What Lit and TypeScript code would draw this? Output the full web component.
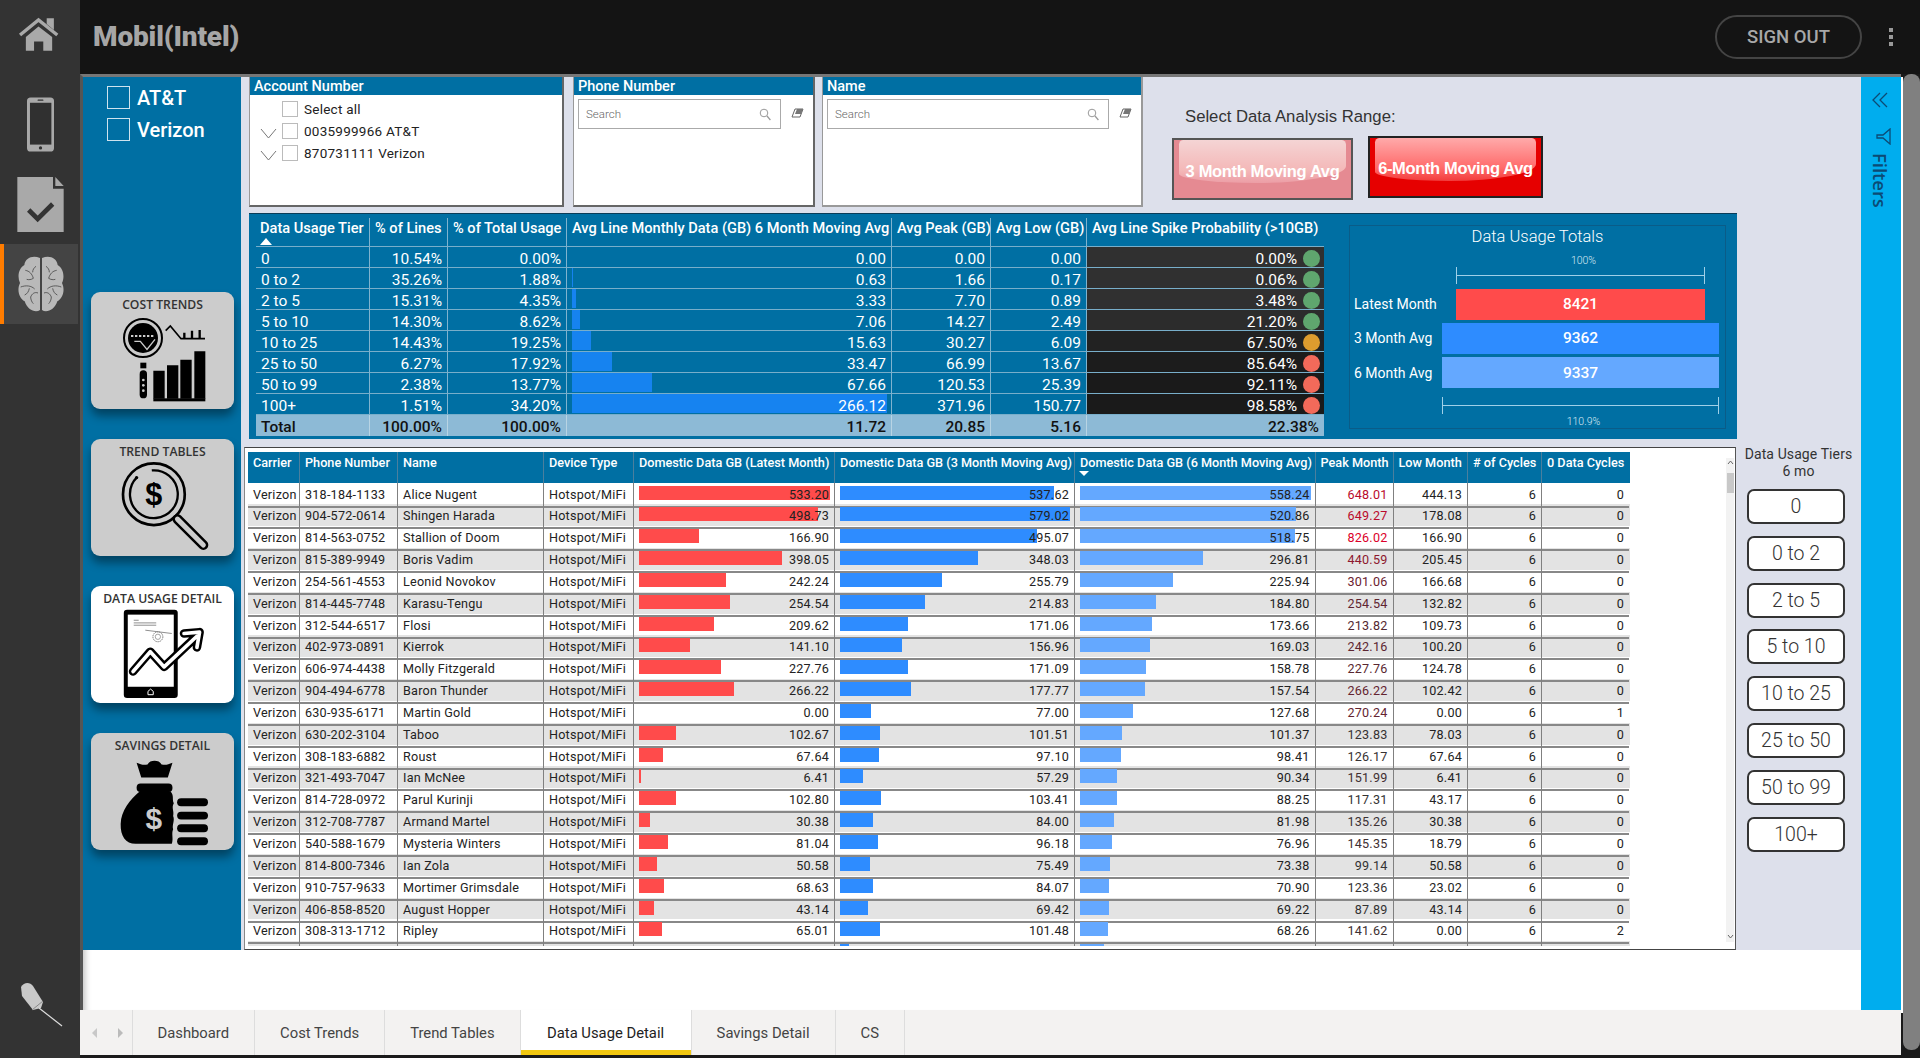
import { LitElement, html, css, svg } from 'lit';
import { customElement } from 'lit/decorators.js';

type Row = [string, string, number, number, number, number, number, number];

const ROWS: Row[] = [
  ['318-184-1133', 'Alice Nugent', 533.2, 537.62, 558.24, 648.01, 444.13, 0],
  ['904-572-0614', 'Shingen Harada', 498.73, 579.02, 520.86, 649.27, 178.08, 0],
  ['814-563-0752', 'Stallion of Doom', 166.9, 495.07, 518.75, 826.02, 166.9, 0],
  ['815-389-9949', 'Boris Vadim', 398.05, 348.03, 296.81, 440.59, 205.45, 0],
  ['254-561-4553', 'Leonid Novokov', 242.24, 255.79, 225.94, 301.06, 166.68, 0],
  ['814-445-7748', 'Karasu-Tengu', 254.54, 214.83, 184.8, 254.54, 132.82, 0],
  ['312-544-6517', 'Flosi', 209.62, 171.06, 173.66, 213.82, 109.73, 0],
  ['402-973-0891', 'Kierrok', 141.1, 156.96, 169.03, 242.16, 100.2, 0],
  ['606-974-4438', 'Molly Fitzgerald', 227.76, 171.09, 158.78, 227.76, 124.78, 0],
  ['904-494-6778', 'Baron Thunder', 266.22, 177.77, 157.54, 266.22, 102.42, 0],
  ['630-935-6171', 'Martin Gold', 0, 77, 127.68, 270.24, 0, 1],
  ['630-202-3104', 'Taboo', 102.67, 101.51, 101.37, 123.83, 78.03, 0],
  ['308-183-6882', 'Roust', 67.64, 97.1, 98.41, 126.17, 67.64, 0],
  ['321-493-7047', 'Ian McNee', 6.41, 57.29, 90.34, 151.99, 6.41, 0],
  ['814-728-0972', 'Parul Kurinji', 102.8, 103.41, 88.25, 117.31, 43.17, 0],
  ['312-708-7787', 'Armand Martel', 30.38, 84, 81.98, 135.26, 30.38, 0],
  ['540-588-1679', 'Mysteria Winters', 81.04, 96.18, 76.96, 145.35, 18.79, 0],
  ['814-800-7346', 'Ian Zola', 50.58, 75.49, 73.38, 99.14, 50.58, 0],
  ['910-757-9633', 'Mortimer Grimsdale', 68.63, 84.07, 70.9, 123.36, 23.02, 0],
  ['406-858-8520', 'August Hopper', 43.14, 69.42, 69.22, 87.89, 43.14, 0],
  ['308-313-1712', 'Ripley', 65.01, 101.48, 68.26, 141.62, 0, 2],
];

const TIERS = [
  { tier: '0', lines: '10.54%', usage: '0.00%', avg: '0.00', bar: 0, peak: '0.00', low: '0.00', spike: '0.00%', bg: '#303030', dot: '#5fa66e' },
  { tier: '0 to 2', lines: '35.26%', usage: '1.88%', avg: '0.63', bar: 1, peak: '1.66', low: '0.17', spike: '0.06%', bg: '#303030', dot: '#5fa66e' },
  { tier: '2 to 5', lines: '15.31%', usage: '4.35%', avg: '3.33', bar: 3.5, peak: '7.70', low: '0.89', spike: '3.48%', bg: '#303030', dot: '#5fa66e' },
  { tier: '5 to 10', lines: '14.30%', usage: '8.62%', avg: '7.06', bar: 8, peak: '14.27', low: '2.49', spike: '21.20%', bg: '#2c2c2c', dot: '#5fa66e' },
  { tier: '10 to 25', lines: '14.43%', usage: '19.25%', avg: '15.63', bar: 18.5, peak: '30.27', low: '6.09', spike: '67.50%', bg: '#222', dot: '#dd9c2e' },
  { tier: '25 to 50', lines: '6.27%', usage: '17.92%', avg: '33.47', bar: 39.5, peak: '66.99', low: '13.67', spike: '85.64%', bg: '#1c1c1c', dot: '#f26a5a' },
  { tier: '50 to 99', lines: '2.38%', usage: '13.77%', avg: '67.66', bar: 80, peak: '120.53', low: '25.39', spike: '92.11%', bg: '#1a1a1a', dot: '#f26a5a' },
  { tier: '100+', lines: '1.51%', usage: '34.20%', avg: '266.12', bar: 315, peak: '371.96', low: '150.77', spike: '98.58%', bg: '#1a1a1a', dot: '#f26a5a' },
];

const TIER_BUTTONS = ['0', '0 to 2', '2 to 5', '5 to 10', '10 to 25', '25 to 50', '50 to 99', '100+'];
const TABS = ['Dashboard', 'Cost Trends', 'Trend Tables', 'Data Usage Detail', 'Savings Detail', 'CS'];
const ACTIVE_TAB = 'Data Usage Detail';

// red shade of the Peak Month column, grows with the value
function peakColor(v: number) {
  const t = Math.min(1, Math.max(0, (v - 120) / 700)) ** 0.8;
  const r = Math.round(0x33 + (0xdc - 0x33) * t);
  const g = Math.round(0x33 - 0x33 * t);
  const b = Math.round(0x33 + (0x2a - 0x33) * t);
  return `rgb(${r},${g},${b})`;
}

const homeIcon = svg`<svg class="rail-icon" width="41" height="34" viewBox="55 55 120 98">
  <path d="M78 113 115 82l40 31v40h-26v-27h-27v27H78z" fill="#a9a9a9"/>
  <path d="M61 107 115 63l55 44" fill="none" stroke="#a9a9a9" stroke-width="10"/>
  <path d="M139 58h21v34l-21-17z" fill="#a9a9a9"/></svg>`;

const phoneIcon = svg`<svg class="rail-icon" width="27" height="55" viewBox="80 292 82 164">
  <rect x="80" y="292" width="82" height="164" rx="11" fill="#a9a9a9"/>
  <rect x="89" y="308" width="65" height="127" fill="#303030"/>
  <rect x="112" y="298" width="18" height="4" rx="2" fill="#303030"/>
  <circle cx="121" cy="445" r="5" fill="#303030"/></svg>`;

const docIcon = svg`<svg class="rail-icon" width="47" height="55" viewBox="52 531 139 165">
  <path d="M52 531h107v35h32v130H52z" fill="#a9a9a9"/>
  <path d="M166 531l25 27h-25z" fill="#a9a9a9"/>
  <path d="M86 630l27 27 45-45" fill="none" stroke="#333" stroke-width="14"/></svg>`;

const brainIcon = svg`<svg width="46" height="56" viewBox="52 770 138 166">
  <path d="M118 775c-23-9-44 0-47 21-17 10-22 34-13 54-10 21-3 45 14 55 8 26 33 36 46 26z" fill="#b9b9b9"/>
  <path d="M124 775c23-9 44 0 47 21 17 10 22 34 13 54 10 21 3 45-14 55-8 26-33 36-46 26z" fill="#b9b9b9"/>
  <g fill="none" stroke="#444" stroke-width="2.4">
    <path d="M74 812c12 2 20 10 24 24M98 836c-6 4-14 5-20 3M60 862c16-6 32-4 42 6M86 866c-2 10-6 16-14 20M112 880c-10-4-18 2-22 12 0 8 4 16 8 20M106 800c-6 4-10 10-10 18"/>
    <path d="M168 812c-12 2-20 10-24 24M144 836c6 4 14 5 20 3M182 862c-16-6-32-4-42 6M156 866c2 10 6 16 14 20M130 880c10-4 18 2 22 12 0 8-4 16-8 20M136 800c6 4 10 10 10 18"/>
  </g></svg>`;

const pinIcon = svg`<svg width="45" height="46" viewBox="0 0 45 46">
  <path d="M3 6c3-5 9-5 12-1l10 16-2 6-8 2-11-14z" fill="#c9c9c9"/>
  <path d="M21 27 44 45" stroke="#ddd" stroke-width="1.2"/>
  <path d="M14 29 25 20" stroke="#888" stroke-width="1"/></svg>`;

const costIcon = svg`<svg class="cost" width="85" height="84" viewBox="125 118 255 252">
  <circle cx="188" cy="178" r="57" fill="none" stroke="#000" stroke-width="6"/>
  <circle cx="188" cy="178" r="45" fill="#000"/>
  <path d="M152 172h72" stroke="#ccc" stroke-width="6" stroke-dasharray="7 5"/>
  <path d="M162 188h18l20 24 24-30" fill="none" stroke="#ccc" stroke-width="4"/>
  <path d="M256 156l14-14 32 38h72" fill="none" stroke="#000" stroke-width="5"/>
  <path d="M312 180v-18M335 180v-24M358 180v-26" stroke="#000" stroke-width="7"/>
  <rect x="180" y="252" width="18" height="17" fill="#000"/>
  <rect x="178" y="275" width="22" height="84" rx="11" fill="#000"/>
  <circle cx="189" cy="304" r="4" fill="#ccc"/><circle cx="189" cy="320" r="4" fill="#ccc"/><circle cx="189" cy="336" r="4" fill="#ccc"/>
  <path d="M219 276h34v84h-34zM260 260h34v100h-34zM300 243h34v117h-34zM342 218h33v142h-33z" fill="#000"/>
  <rect x="219" y="359" width="156" height="9" fill="#000"/></svg>`;

const trendIcon = svg`<svg width="88" height="88" viewBox="118 548 265 265">
  <circle cx="217" cy="645" r="93" fill="none" stroke="#000" stroke-width="8"/>
  <circle cx="217" cy="645" r="72" fill="none" stroke="#000" stroke-width="7" stroke-dasharray="400 52" transform="rotate(-95 217 645)"/>
  <circle cx="165" cy="595" r="5" fill="#000"/>
  <text x="217" y="678" text-anchor="middle" font-family="Liberation Sans, sans-serif" font-size="92" font-weight="700" fill="#000">$</text>
  <path d="M288 720l78 78" stroke="#000" stroke-width="30" stroke-linecap="round"/>
  <path d="M288 720l78 78" stroke="#ccc" stroke-width="15" stroke-linecap="round"/></svg>`;

const usageIcon = svg`<svg width="83" height="90" viewBox="128 113 250 272">
  <rect x="130" y="115" width="163" height="267" rx="10" fill="#000"/>
  <rect x="142" y="130" width="139" height="218" fill="#fff"/>
  <path d="M203 372v-10l8-7 8 7v10z" fill="none" stroke="#fff" stroke-width="3"/>
  <path d="M160 147h15M160 155h68M160 162h68M195 177l80 10" stroke="#555" stroke-width="2"/>
  <circle cx="233" cy="197" r="15" fill="none" stroke="#777" stroke-width="3" stroke-dasharray="4 2"/>
  <circle cx="233" cy="197" r="8" fill="none" stroke="#777" stroke-width="2"/>
  <path d="M158 302l52-60 42 46 98-92M312 187l47-4-8 46" fill="none" stroke="#000" stroke-width="26" stroke-linejoin="round" stroke-linecap="round"/>
  <path d="M158 302l52-60 42 46 98-92M312 187l47-4-8 46" fill="none" stroke="#fff" stroke-width="11" stroke-linejoin="round" stroke-linecap="round"/></svg>`;

const savingsIcon = svg`<svg width="89" height="90" viewBox="118 558 268 270">
  <path d="M168 578c14 6 24 8 34 4 4-14 36-14 40 0 10 4 20 2 34-4l-14 44h-80z" fill="#000"/>
  <rect x="168" y="640" width="108" height="26" rx="12" fill="#000"/>
  <path d="M178 664h92c12 14 4 24 10 36-8 14 2 24-2 38 6 14-4 26 0 40-6 14 2 28-4 44H165c-30 0-46-24-45-60 1-38 28-74 58-98z" fill="#000"/>
  <text x="220" y="776" text-anchor="middle" font-family="Liberation Sans, sans-serif" font-size="90" font-weight="700" fill="#ccc">$</text>
  <rect x="290" y="685" width="93" height="24" rx="12" fill="#000"/>
  <rect x="290" y="725" width="93" height="24" rx="12" fill="#000"/>
  <rect x="290" y="763" width="93" height="24" rx="12" fill="#000"/>
  <rect x="290" y="802" width="93" height="24" rx="12" fill="#000"/></svg>`;

const searchIcon = svg`<svg width="12" height="13" viewBox="0 0 12 13"><circle cx="5" cy="5" r="3.8" fill="none" stroke="#999" stroke-width="1"/><path d="M8 8l3.4 4" stroke="#999" stroke-width="1.2"/></svg>`;
const eraserIcon = svg`<svg width="13" height="10" viewBox="0 0 13 10"><path d="M4 1h8L9 9H1z" fill="none" stroke="#666" stroke-width="1"/><path d="M6 1h6l-2 5H4z" fill="#777"/></svg>`;
const chevronIcon = svg`<svg width="17" height="11" viewBox="0 0 17 11"><path d="M1 1l7.5 9L16 1" fill="none" stroke="#777" stroke-width="1"/></svg>`;

@customElement('app-root')
export class AppRoot extends LitElement {
  static styles = css`
    :host {
      display: flex;
      width: 1920px;
      height: 1058px;
      overflow: hidden;
      background: #1a1a1a;
      font-family: Roboto, 'Liberation Sans', sans-serif;
    }
    .rail {
      width: 80px;
      height: 1058px;
      flex: none;
      background: #333;
      display: flex;
      flex-direction: column;
    }
    .rail-icon {
      display: block;
    }
    .rail .home { margin: 17px 0 0 18px; }
    .rail .phone { margin: 46px 0 0 27px; }
    .rail .doc { margin: 25px 0 0 17px; }
    .rail-active {
      margin-top: 12px;
      width: 78px;
      height: 80px;
      flex: none;
      background: #444;
      border-left: 4px solid #ff7c00;
      box-sizing: border-box;
      padding: 12px 0 0 14px;
    }
    .rail .pin { margin: auto 0 27px 18px; }
    .main {
      flex: 1;
      display: flex;
      flex-direction: column;
      min-width: 0;
    }
    .topbar {
      height: 74px;
      flex: none;
      background: #141414;
      display: flex;
      align-items: center;
      padding-left: 13px;
    }
    .logo {
      font-size: 28px;
      font-weight: 900;
      letter-spacing: -0.15px;
      color: #a6a6a6;
      margin-top: -2px;
    }
    .signout {
      margin-left: auto;
      width: 147px;
      height: 44px;
      box-sizing: border-box;
      border: 2px solid #444;
      border-radius: 22px;
      color: #a8a8a8;
      font-size: 18.5px;
      font-weight: 500;
      display: flex;
      align-items: center;
      justify-content: center;
    }
    .kebab {
      width: 4px;
      margin: 0 27px 0 27px;
      display: flex;
      flex-direction: column;
      gap: 3px;
    }
    .kebab i {
      display: block;
      width: 4px;
      height: 4px;
      background: #999;
    }
    .workspace {
      flex: 1;
      display: flex;
      min-height: 0;
    }
    .page-col {
      flex: 1;
      display: flex;
      flex-direction: column;
      min-width: 0;
      height: 981px;
    }
    .page {
      height: 936px;
      flex: none;
      display: flex;
      background: #fff;
      border-top: 3px solid #777;
      border-left: 3px solid #555;
      box-sizing: border-box;
    }
    .canvas-col {
      width: 1778px;
      flex: none;
      box-shadow: inset 8px 0 6px -6px rgba(0, 0, 0, 0.25);
    }
    .report {
      height: 873px;
      display: flex;
      background: #dde0eb;
    }
    .left-panel {
      width: 158px;
      flex: none;
      background: #006fa3;
      box-sizing: border-box;
      padding-top: 9px;
    }
    .check {
      display: flex;
      align-items: center;
      height: 23px;
      margin: 0 0 9px 24px;
      color: #fff;
      font-size: 20px;
      font-weight: 500;
      gap: 7px;
    }
    .check i {
      display: block;
      width: 23px;
      height: 23px;
      box-sizing: border-box;
      border: 1px solid #cfe3ee;
    }
    .navs {
      margin: 151px 0 0 8px;
      display: flex;
      flex-direction: column;
      gap: 30.5px;
    }
    .nav {
      width: 143px;
      height: 116.5px;
      box-sizing: border-box;
      background: #ccc;
      border-radius: 9px;
      box-shadow: 0 7px 10px rgba(0, 0, 0, 0.4);
      display: flex;
      flex-direction: column;
      align-items: center;
      font-family: 'Open Sans', sans-serif;
      font-weight: 600;
      font-size: 12.2px;
      color: #333;
      padding-top: 4px;
      line-height: 17px;
    }
    .nav.on {
      background: #fff;
    }
    .nav svg {
      display: block;
      margin-top: 2px;
      margin-left: 4px;
    }
    .nav svg.cost {
      margin-top: 5px;
    }
    .center {
      flex: 1;
      min-width: 0;
      padding-left: 3px;
    }
    .slicers {
      height: 130px;
      margin-left: 5px;
      display: flex;
    }
    .slicer {
      box-sizing: border-box;
      background: #fff;
      border-right: 2px solid #666;
      border-bottom: 2px solid #666;
      border-left: 1px solid #999;
    }
    .slicer.account { width: 315px; }
    .slicer.phone { width: 242px; margin-left: 9px; }
    .slicer.name { width: 321px; margin-left: 7px; border-color: #999; }
    .slicer-head {
      height: 18px;
      line-height: 19px;
      background: #006fa3;
      color: #fff;
      font-size: 14.5px;
      font-weight: 500;
      padding-left: 4px;
    }
    .search-row {
      display: flex;
      align-items: center;
      padding: 4px 0 0 4px;
    }
    .search {
      box-sizing: border-box;
      height: 30px;
      flex: 1;
      border: 1px solid #aaa;
      display: flex;
      align-items: center;
      justify-content: space-between;
      padding: 0 9px 0 7px;
      font-size: 11.5px;
      font-weight: 300;
      color: #666;
    }
    .eraser {
      width: 32px;
      text-align: center;
      margin-top: -3px;
    }
    .options {
      padding-top: 3px;
    }
    .option {
      height: 22px;
      display: flex;
      align-items: center;
      font-size: 13.5px;
      letter-spacing: 0.25px;
      color: #222;
    }
    .option .chev {
      width: 17px;
      height: 11px;
      margin-left: 10px;
    }
    .option .box {
      width: 16px;
      height: 16px;
      box-sizing: border-box;
      border: 1px solid #bbb;
      margin: 0 6px 0 5px;
      flex: none;
    }
    .range {
      margin-left: 29px;
      color: #333;
      font-family: 'Liberation Sans', sans-serif;
    }
    .range-title {
      margin: 30px 0 0 13px;
      font-size: 16.7px;
      line-height: 20px;
    }
    .range-btns {
      display: flex;
      gap: 15px;
      margin-top: 9px;
    }
    .gloss {
      position: relative;
      overflow: hidden;
      box-sizing: border-box;
      width: 175px;
      height: 62px;
      border: 2.5px solid #222;
      background: #e60000;
      color: #fff;
      font-weight: 700;
      font-size: 16.5px;
      letter-spacing: -0.35px;
      display: flex;
      align-items: center;
      justify-content: center;
      padding-top: 2px;
    }
    .gloss::before {
      content: '';
      position: absolute;
      left: 5px;
      right: 5px;
      top: 0;
      height: 43px;
      border-radius: 6px 6px 70% 60% / 6px 6px 22px 12px;
      background: linear-gradient(#ffaaaa, #ff6a6a 70%, #f23c3c);
    }
    .gloss span {
      position: relative;
    }
    .gloss.faded {
      width: 181px;
      margin-top: 2px;
      border-color: #555;
      background: #e58a92;
      padding-top: 4px;
    }
    .gloss.faded::before {
      background: linear-gradient(#f4d4d4, #f4b8b8 70%, #ec9ea6);
    }
    .summary {
      width: 1488px;
      height: 226px;
      margin: 6px 0 0 5px;
      box-sizing: border-box;
      background: #006fa3;
      border-top: 1px solid #0a3c58;
      display: flex;
      padding: 4px 0 0 7px;
    }
    .tier-table {
      width: 1068px;
      flex: none;
      display: grid;
      grid-template-columns: 114px 78px 119px 325px 99px 96px 237px;
      grid-template-rows: 29px repeat(9, 21px);
      color: #fff;
      font-size: 15.5px;
    }
    .tier-table > div {
      box-sizing: border-box;
      border-right: 1px solid #7fb3cf;
      border-bottom: 1.5px solid #78aeca;
      padding-right: 5px;
      text-align: right;
      line-height: 25px;
      position: relative;
      white-space: nowrap;
    }
    .tier-table > div.last {
      border-right: 0;
    }
    .tier-table > div.th {
      font-weight: 500;
      font-size: 14.6px;
      line-height: 20px;
      text-align: left;
      padding-left: 5px;
    }
    .tier-table > div.th.left {
      padding-left: 4px;
    }
    .tier-table > div.first {
      text-align: left;
      padding-left: 5px;
    }
    .sort-up {
      position: absolute;
      left: 4px;
      top: 20px;
      width: 0;
      height: 0;
      border: 6px solid transparent;
      border-top: 0;
      border-bottom: 7px solid #fff;
    }
    .tier-bar {
      position: absolute;
      left: 5px;
      top: 0;
      bottom: 1px;
      background: #1683f0;
    }
    .tier-table .cell-text {
      position: relative;
    }
    .tier-table > div.spike {
      padding-right: 27px;
    }
    .dot {
      position: absolute;
      right: 4px;
      top: 2.5px;
      width: 17px;
      height: 17px;
      border-radius: 50%;
    }
    .tier-table > div.total {
      background: #8dbad6;
      color: #111;
      font-weight: 500;
      border-bottom: 0;
      border-right-color: #b8d4e4;
      line-height: 24px;
    }
    .totals {
      width: 377px;
      height: 204px;
      flex: none;
      margin: 7px 0 0 25px;
      box-sizing: border-box;
      border: 1px solid #0a5c88;
      color: #fff;
      display: flex;
      flex-direction: column;
    }
    .totals-title {
      font-size: 16.5px;
      font-weight: 300;
      text-align: center;
      line-height: 22px;
      margin-top: 0;
      height: 25px;
    }
    .totals-pct {
      margin-left: 92px;
      text-align: center;
      font-size: 10.5px;
      font-weight: 300;
      color: #d8e8f2;
      line-height: 13px;
      margin-top: 3px;
    }
    .totals-pct.end {
      margin-top: 1px;
    }
    .bracket {
      margin-left: 92px;
      width: 277px;
      height: 17px;
      box-sizing: border-box;
      border-left: 1px solid #9fd0e8;
      border-right: 1px solid #9fd0e8;
      background: linear-gradient(#9fd0e8, #9fd0e8) center / 100% 1px no-repeat;
      flex: none;
    }
    .bracket.inset {
      margin-left: 106px;
      width: 249px;
      margin-top: 0;
    }
    .bracket.low {
      margin-top: 9px;
    }
    .bullet {
      display: flex;
      align-items: center;
      height: 31px;
      font-size: 14px;
      font-weight: 400;
      margin-top: 3.5px;
    }
    .bullet.first {
      margin-top: 5px;
    }
    .bullet label {
      width: 92px;
      flex: none;
      padding-left: 4px;
      box-sizing: border-box;
    }
    .bullet b {
      height: 100%;
      width: 277px;
      display: flex;
      align-items: center;
      justify-content: center;
      font-size: 15.5px;
      font-weight: 500;
    }
    .bullet.first b {
      width: 249px;
      margin-left: 14px;
    }
    .detail-row {
      display: flex;
      margin-top: 8px;
      height: 503px;
    }
    .detail {
      width: 1492px;
      flex: none;
      box-sizing: border-box;
      background: #fff;
      border-top: 1px solid #444;
      border-right: 1.5px solid #555;
      border-bottom: 1.5px solid #444;
      border-left: 1px solid #888;
      padding: 4px 2px 0 3px;
      display: flex;
      overflow: hidden;
    }
    .grid-wrap {
      width: 1382px;
      flex: none;
      overflow: hidden;
      height: 494px;
    }
    .grid-row {
      display: grid;
      grid-template-columns: 52px 98px 146px 90px 201px 240px 240.5px 78px 74.5px 74px 87px;
      height: 21.85px;
      font-size: 12.6px;
      letter-spacing: 0.22px;
      color: #222;
    }
    .grid-row:nth-child(even) {
      background: #e3e3e3;
    }
    .grid-row > div {
      box-sizing: border-box;
      border-right: 1.5px solid #808080;
      border-bottom: 2px solid #888;
      padding: 0 5px;
      line-height: 23px;
      white-space: nowrap;
      position: relative;
    }
    .grid-row > div:last-child {
      border-right: 0;
    }
    .grid-row .num {
      text-align: right;
    }
    .grid-row .num span {
      position: relative;
    }
    .grid-bar {
      position: absolute;
      left: 5px;
      top: 3px;
      height: 14px;
    }
    .grid-bar.red { background: #ff4b4b; }
    .grid-bar.blue { background: #2e8cff; }
    .grid-bar.sky { background: #64a8ff; }
    .grid-head {
      display: grid;
      grid-template-columns: 52px 98px 146px 90px 201px 240px 240.5px 78px 74.5px 74px 87px;
      height: 30.5px;
      background: #006fa3;
      color: #fff;
      font-size: 12.7px;
      font-weight: 500;
      line-height: 14px;
    }
    .grid-head > div {
      box-sizing: border-box;
      border-right: 1.5px solid #4a7f9e;
      padding: 4px 0 0 5px;
      white-space: nowrap;
      position: relative;
      overflow: hidden;
    }
    .grid-head > div:last-child {
      border-right: 0;
    }
    .sort-down {
      position: absolute;
      left: 4px;
      top: 19px;
      width: 0;
      height: 0;
      border: 5px solid transparent;
      border-bottom: 0;
      border-top: 5px solid #fff;
    }
    .scroll {
      width: 8px;
      margin-left: 96px;
      margin-top: 6px;
      height: 484px;
      flex: none;
      background: #f2f2f2;
      display: flex;
      flex-direction: column;
      align-items: center;
    }
    .scroll .thumb {
      width: 7px;
      height: 20px;
      margin-top: 8px;
      background: #c8c8c8;
    }
    .scroll svg {
      display: block;
      flex: none;
    }
    .scroll svg.down {
      margin-top: auto;
      margin-bottom: 3px;
    }
    .tiers {
      width: 125px;
      flex: none;
      text-align: center;
    }
    .tiers-title {
      font-size: 14px;
      line-height: 17px;
      color: #333;
      letter-spacing: 0.1px;
      height: 43px;
      margin-top: -1px;
      box-sizing: border-box;
    }
    .tier-btn {
      width: 98px;
      height: 35px;
      box-sizing: border-box;
      margin: 0 0 11.8px 11px;
      background: #fff;
      border: 2px solid #333;
      border-radius: 7px;
      display: flex;
      align-items: center;
      justify-content: center;
      font-size: 19.5px;
      font-weight: 300;
      color: #333;
    }
    .filter-pane {
      width: 40px;
      height: 933px;
      flex: none;
      background: #00adee;
      display: flex;
      flex-direction: column;
      align-items: center;
      color: #0c4a74;
    }
    .filter-pane .back { display: block; margin: 15px 0 0 -3px; }
    .filter-pane .funnel { display: block; margin: 20px 0 0 5px; }
    .filter-label {
      writing-mode: vertical-rl;
      font-family: 'Open Sans', sans-serif;
      font-size: 18.4px;
      font-weight: 600;
      margin: 8px 0 0 -2px;
      line-height: 20px;
    }
    .tabs {
      height: 45px;
      flex: none;
      background: #f3f2f1;
      display: flex;
      padding-left: 3px;
      font-size: 14.8px;
      color: #444;
    }
    .tab-arrows {
      width: 49.5px;
      flex: none;
      display: flex;
      align-items: center;
      gap: 21px;
      padding-left: 9px;
      box-sizing: border-box;
      border-right: 1px solid #ddd;
    }
    .tab-arrows i {
      display: block;
      width: 0;
      height: 0;
      border: 5px solid transparent;
      border-left: 0;
      border-right: 5px solid #c8c8c8;
    }
    .tab-arrows i + i {
      border-right: 0;
      border-left: 5px solid #bbb;
    }
    .tab {
      padding: 0 25px;
      display: flex;
      align-items: center;
      border-right: 1px solid #ddd;
      box-sizing: border-box;
    }
    .tab.on {
      padding: 0 26.5px;
      background: #fff;
      color: #222;
      box-shadow: inset 0 -5px 0 #f2c811;
    }
    .page-scroll {
      width: 17px;
      flex: none;
      margin-left: 2px;
      height: 976px;
      background: #808080;
      border-radius: 8px;
    }
    .gutter {
      width: 2px;
      flex: none;
      background: #fff;
      height: 936px;
    }
  `;

  private renderBar(value: number, max: number, full: number, color: string) {
    return html`<div class="num">
      <i class="grid-bar ${color}" style="width:${(value / max) * full}px"></i>
      <span>${value.toFixed(2)}</span>
    </div>`;
  }

  private renderTierTable() {
    return html`<div class="tier-table">
      <div class="th left">Data Usage Tier<i class="sort-up"></i></div>
      <div class="th">% of Lines</div>
      <div class="th">% of Total Usage</div>
      <div class="th">Avg Line Monthly Data (GB) 6 Month Moving Avg</div>
      <div class="th">Avg Peak (GB)</div>
      <div class="th">Avg Low (GB)</div>
      <div class="th last">Avg Line Spike Probability (&gt;10GB)</div>
      ${TIERS.map(
        t => html`<div class="first">${t.tier}</div>
          <div>${t.lines}</div>
          <div>${t.usage}</div>
          <div>
            ${t.bar ? html`<i class="tier-bar" style="width:${t.bar}px"></i>` : ''}
            <span class="cell-text">${t.avg}</span>
          </div>
          <div>${t.peak}</div>
          <div>${t.low}</div>
          <div class="spike last" style="background:${t.bg}">
            ${t.spike}<i class="dot" style="background:${t.dot}"></i>
          </div>`,
      )}
      <div class="first total">Total</div>
      <div class="total">100.00%</div>
      <div class="total">100.00%</div>
      <div class="total">11.72</div>
      <div class="total">20.85</div>
      <div class="total">5.16</div>
      <div class="total last">22.38%</div>
    </div>`;
  }

  private renderTotals() {
    return html`<div class="totals">
      <div class="totals-title">Data Usage Totals</div>
      <div class="totals-pct">100%</div>
      <div class="bracket inset"></div>
      <div class="bullet first"><label>Latest Month</label><b style="background:#ff4b4b">8421</b></div>
      <div class="bullet"><label>3 Month Avg</label><b style="background:#2e8cff">9362</b></div>
      <div class="bullet"><label>6 Month Avg</label><b style="background:#64a8ff">9337</b></div>
      <div class="bracket low"></div>
      <div class="totals-pct end">110.9%</div>
    </div>`;
  }

  private renderDetail() {
    return html`<div class="detail">
      <div class="grid-wrap">
        <div class="grid-head">
          <div>Carrier</div>
          <div>Phone Number</div>
          <div>Name</div>
          <div>Device Type</div>
          <div>Domestic Data GB (Latest Month)</div>
          <div>Domestic Data GB (3 Month Moving Avg)</div>
          <div>Domestic Data GB (6 Month Moving Avg)<i class="sort-down"></i></div>
          <div>Peak Month</div>
          <div>Low Month</div>
          <div># of Cycles</div>
          <div>0 Data Cycles</div>
        </div>
        <div>
          ${ROWS.map(
            r => html`<div class="grid-row">
              <div>Verizon</div>
              <div>${r[0]}</div>
              <div>${r[1]}</div>
              <div>Hotspot/MiFi</div>
              ${this.renderBar(r[2], 533.2, 191, 'red')}
              ${this.renderBar(r[3], 579.02, 230, 'blue')}
              ${this.renderBar(r[4], 558.24, 231, 'sky')}
              <div class="num" style="color:${peakColor(r[5])}">${r[5].toFixed(2)}</div>
              <div class="num">${r[6].toFixed(2)}</div>
              <div class="num">6</div>
              <div class="num">${r[7]}</div>
            </div>`,
          )}
          <div class="grid-row">
            <div></div><div></div><div></div><div></div><div></div>
            <div><i class="grid-bar blue" style="width:9px"></i></div>
            <div><i class="grid-bar sky" style="width:24px"></i></div>
            <div></div><div></div><div></div><div></div>
          </div>
        </div>
      </div>
      <div class="scroll">
        <svg width="7" height="5" viewBox="0 0 7 5" style="margin-top:2px"><path d="M1 4l2.5-3L6 4" fill="none" stroke="#666"/></svg>
        <div class="thumb"></div>
        <svg class="down" width="7" height="5" viewBox="0 0 7 5"><path d="M1 1l2.5 3L6 1" fill="none" stroke="#666"/></svg>
      </div>
    </div>`;
  }

  render() {
    return html`
      <nav class="rail">
        <div class="home">${homeIcon}</div>
        <div class="phone">${phoneIcon}</div>
        <div class="doc">${docIcon}</div>
        <div class="rail-active">${brainIcon}</div>
        <div class="pin">${pinIcon}</div>
      </nav>
      <div class="main">
        <header class="topbar">
          <div class="logo">Mobil(Intel)</div>
          <div class="signout">SIGN OUT</div>
          <div class="kebab"><i></i><i></i><i></i></div>
        </header>
        <div class="workspace">
          <div class="page-col">
            <div class="page">
              <div class="canvas-col">
                <div class="report">
                  <aside class="left-panel">
                    <div class="check"><i></i>AT&amp;T</div>
                    <div class="check"><i></i>Verizon</div>
                    <div class="navs">
                      <div class="nav">COST TRENDS${costIcon}</div>
                      <div class="nav">TREND TABLES${trendIcon}</div>
                      <div class="nav on">DATA USAGE DETAIL${usageIcon}</div>
                      <div class="nav">SAVINGS DETAIL${savingsIcon}</div>
                    </div>
                  </aside>
                  <section class="center">
                    <div class="slicers">
                      <div class="slicer account">
                        <div class="slicer-head">Account Number</div>
                        <div class="options">
                          <div class="option"><span class="chev"></span><span class="box"></span>Select all</div>
                          <div class="option"><span class="chev">${chevronIcon}</span><span class="box"></span>0035999966 AT&amp;T</div>
                          <div class="option"><span class="chev">${chevronIcon}</span><span class="box"></span>870731111 Verizon</div>
                        </div>
                      </div>
                      <div class="slicer phone">
                        <div class="slicer-head">Phone Number</div>
                        <div class="search-row">
                          <div class="search">Search ${searchIcon}</div>
                          <div class="eraser">${eraserIcon}</div>
                        </div>
                      </div>
                      <div class="slicer name">
                        <div class="slicer-head">Name</div>
                        <div class="search-row">
                          <div class="search">Search ${searchIcon}</div>
                          <div class="eraser">${eraserIcon}</div>
                        </div>
                      </div>
                      <div class="range">
                        <div class="range-title">Select Data Analysis Range:</div>
                        <div class="range-btns">
                          <div class="gloss faded"><span>3 Month Moving Avg</span></div>
                          <div class="gloss"><span>6-Month Moving Avg</span></div>
                        </div>
                      </div>
                    </div>
                    <div class="summary">${this.renderTierTable()} ${this.renderTotals()}</div>
                    <div class="detail-row">
                      ${this.renderDetail()}
                      <div class="tiers">
                        <div class="tiers-title">Data Usage Tiers<br />6 mo</div>
                        ${TIER_BUTTONS.map(t => html`<div class="tier-btn">${t}</div>`)}
                      </div>
                    </div>
                  </section>
                </div>
              </div>
              <aside class="filter-pane">
                <svg class="back" width="16" height="16" viewBox="0 0 16 16"><path d="M8 1 1 8l7 7M15 1 8 8l7 7" fill="none" stroke="currentColor" stroke-width="1.3"/></svg>
                <svg class="funnel" width="15" height="17" viewBox="0 0 15 17"><path d="M14 1v15L7 10H1v-3h6z" fill="none" stroke="currentColor" stroke-width="1.3"/></svg>
                <div class="filter-label">Filters</div>
              </aside>
              <div class="gutter"></div>
            </div>
            <div class="tabs">
              <div class="tab-arrows"><i></i><i></i></div>
              ${TABS.map(t => html`<div class="tab ${t === ACTIVE_TAB ? 'on' : ''}">${t}</div>`)}
            </div>
          </div>
          <div class="page-scroll"></div>
        </div>
      </div>
    `;
  }
}
